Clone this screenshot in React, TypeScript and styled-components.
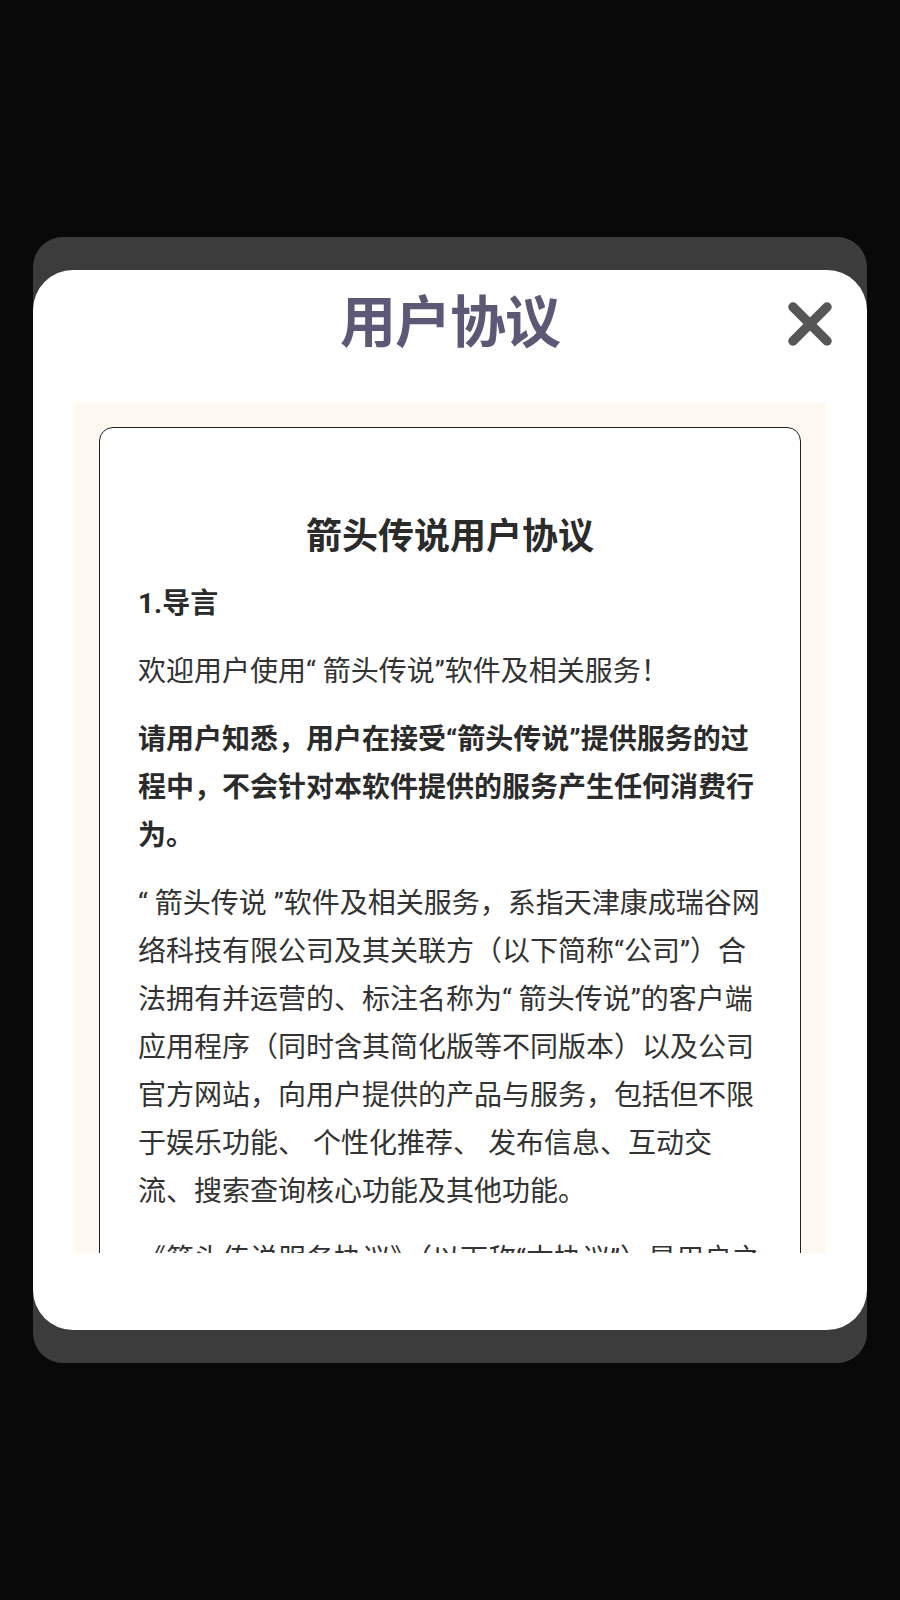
import React from "react";
import styled, { createGlobalStyle } from "styled-components";

const GlobalStyle = createGlobalStyle`
  html, body {
    margin: 0;
    padding: 0;
    background: #090909;
  }
  * { box-sizing: border-box; }
`;

const Screen = styled.div`
  width: 900px;
  height: 1600px;
  display: flex;
  align-items: center;
  justify-content: center;
  background: #090909;
`;

const Frame = styled.div`
  width: 834px;
  background: #3c3c3c;
  border-radius: 30px;
  padding: 33px 0;
`;

const Modal = styled.div`
  height: 1060px;
  background: #ffffff;
  border-radius: 40px;
  display: flex;
  flex-direction: column;
  padding: 0 42px;
`;

const Header = styled.div`
  position: relative;
  height: 102px;
  display: flex;
  align-items: center;
  justify-content: center;
  padding-bottom: 6px;
  margin: 0 -42px 31px;
`;

const Title = styled.h2`
  margin: 0;
  font-family: "Noto Sans CJK SC", sans-serif;
  font-size: 56px;
  line-height: 1;
  font-weight: 700;
  color: #5c5875;
  letter-spacing: -1px;
`;

const CloseButton = styled.button`
  position: absolute;
  right: 35px;
  top: 32px;
  width: 44px;
  height: 44px;
  padding: 0;
  border: none;
  background: transparent;
  cursor: pointer;
  display: flex;
  svg { display: block; }
`;

const ScrollArea = styled.div`
  height: 850px;
  background: #fff8f1;
  padding: 24px;
  overflow-y: auto;
  scrollbar-width: none;
  &::-webkit-scrollbar { display: none; }
`;

const Card = styled.div`
  background: #ffffff;
  border: 1px solid #222222;
  border-radius: 14px;
  padding: 81px 38px 60px;
  font-family: "Roboto", "Noto Sans CJK SC", sans-serif;
  color: #333333;
`;

const DocTitle = styled.h1`
  margin: 0 0 23px;
  font-family: "Noto Sans CJK SC", sans-serif;
  font-size: 36px;
  line-height: 48px;
  font-weight: 700;
  text-align: center;
  color: #2b2b2b;
`;

const Para = styled.p<{ $bold?: boolean }>`
  margin: 0 0 20px;
  font-size: 28px;
  line-height: 48px;
  font-weight: ${(p) => (p.$bold ? 700 : 400)};
  color: ${(p) => (p.$bold ? "#2b2b2b" : "#333333")};
`;

const paragraphs: { text: string; bold?: boolean }[] = [
  { text: "1.导言", bold: true },
  { text: "欢迎用户使用“ 箭头传说”软件及相关服务！" },
  {
    text: "请用户知悉，用户在接受“箭头传说”提供服务的过程中，不会针对本软件提供的服务产生任何消费行为。",
    bold: true,
  },
  {
    text: "“ 箭头传说 ”软件及相关服务，系指天津康成瑞谷网络科技有限公司及其关联方（以下简称“公司”）合法拥有并运营的、标注名称为“ 箭头传说”的客户端应用程序（同时含其简化版等不同版本）以及公司官方网站，向用户提供的产品与服务，包括但不限于娱乐功能、 个性化推荐、 发布信息、互动交流、搜索查询核心功能及其他功能。",
  },
  {
    text: "《箭头传说服务协议》（以下称“本协议”）是用户之",
  },
];

const CloseIcon = () => (
  <svg width="44" height="44" viewBox="0 0 44 44" aria-hidden="true">
    <g stroke="#565656" strokeWidth="9.5" strokeLinecap="round">
      <line x1="5" y1="5" x2="39" y2="39" />
      <line x1="39" y1="5" x2="5" y2="39" />
    </g>
  </svg>
);

export default function App() {
  return (
    <>
      <GlobalStyle />
      <Screen>
        <Frame>
          <Modal>
            <Header>
              <Title>用户协议</Title>
              <CloseButton aria-label="关闭">
                <CloseIcon />
              </CloseButton>
            </Header>
            <ScrollArea>
              <Card>
                <DocTitle>箭头传说用户协议</DocTitle>
                {paragraphs.map((p, i) => (
                  <Para key={i} $bold={p.bold}>
                    {p.text}
                  </Para>
                ))}
              </Card>
            </ScrollArea>
          </Modal>
        </Frame>
      </Screen>
    </>
  );
}
